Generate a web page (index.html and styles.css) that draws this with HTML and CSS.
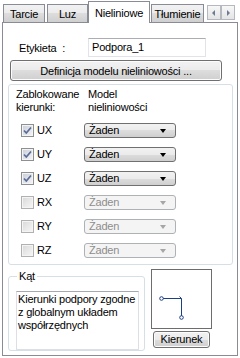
FILE: index.html
```html
<!DOCTYPE html>
<html lang="pl">
<head>
  <meta charset="UTF-8" />
  <title>Podpora - Nieliniowe</title>
  <link rel="stylesheet" href="styles.css">
</head>
<body>

  <div class="tabstrip">
    <div class="tab tab-tarcie">Tarcie</div>
    <div class="tab tab-luz">Luz</div>
    <div class="tab active">Nieliniowe</div>
    <div class="tab tab-tlum">Tłumienie</div>
    <div class="scroller">
      <span class="sbtn left"></span>
      <span class="sbtn right"></span>
    </div>
  </div>

  <div class="panel">
    <div class="label-row">
      <span class="label">Etykieta&nbsp; :</span>
      <div class="textbox">Podpora_1</div>
    </div>

    <button class="btn wide">Definicja modelu nieliniowości ...</button>

    <div class="group dofs">
      <div class="head">
        <div class="col1">Zablokowane<br>kierunki:</div>
        <div>Model<br>nieliniowości</div>
      </div>

      <div class="row">
        <span class="cb checked"><svg width="11" height="11" viewBox="0 0 11 11"><path d="M2 5.5 L4.3 8 L9 2.5" /></svg></span>
        <span class="dof">UX</span>
        <div class="combo">Żaden<i class="arrow"></i></div>
      </div>
      <div class="row">
        <span class="cb checked"><svg width="11" height="11" viewBox="0 0 11 11"><path d="M2 5.5 L4.3 8 L9 2.5" /></svg></span>
        <span class="dof">UY</span>
        <div class="combo">Żaden<i class="arrow"></i></div>
      </div>
      <div class="row">
        <span class="cb checked"><svg width="11" height="11" viewBox="0 0 11 11"><path d="M2 5.5 L4.3 8 L9 2.5" /></svg></span>
        <span class="dof">UZ</span>
        <div class="combo">Żaden<i class="arrow"></i></div>
      </div>
      <div class="row">
        <span class="cb"></span>
        <span class="dof">RX</span>
        <div class="combo disabled">Żaden<i class="arrow"></i></div>
      </div>
      <div class="row">
        <span class="cb"></span>
        <span class="dof">RY</span>
        <div class="combo disabled">Żaden<i class="arrow"></i></div>
      </div>
      <div class="row">
        <span class="cb"></span>
        <span class="dof">RZ</span>
        <div class="combo disabled">Żaden<i class="arrow"></i></div>
      </div>
    </div>

    <div class="bottom">
      <div class="group angle">
        <span class="legend">Kąt</span>
        <div class="memo">Kierunki podpory zgodne<br>z globalnym układem<br>współrzędnych</div>
      </div>

      <div class="dir">
        <div class="preview">
          <svg width="59" height="58" viewBox="0 0 59 58">
            <path class="axis" d="M11 28.5 H29.5 V46" />
            <path class="axis" d="M27.5 26.5 L29.5 28.5" />
            <circle class="node" cx="9.5" cy="28.5" r="1.8" />
            <circle class="node" cx="29.5" cy="47.5" r="1.8" />
          </svg>
        </div>
        <button class="btn small">Kierunek</button>
      </div>
    </div>
  </div>

</body>
</html>
```

FILE: styles.css
```css
body {
  margin: 0;
  width: 240px;
  height: 358px;
  background: #fff;
  font-family: "Liberation Sans", Arial, sans-serif;
  font-size: 11px;
  letter-spacing: -0.2px;
  color: #000;
  overflow: hidden;
}

/* tabs */
.tabstrip {
  display: flex;
  align-items: flex-end;
  height: 22px;
  padding-left: 3px;
}

.tab {
  box-sizing: border-box;
  display: flex;
  justify-content: center;
  height: 18px;
  padding-top: 2px;
  line-height: 15px;
  border: 1px solid #898c95;
  border-bottom: none;
  background: linear-gradient(#f2f2f2, #ebebeb 50%, #dddddd 50%, #cfcfcf);
  white-space: nowrap;
}

.tab-tarcie { width: 42px; }
.tab-luz { width: 41px; margin-left: 2px; }
.tab-tlum { width: 53px; margin-left: 1px; }

.tab.active {
  position: relative;
  z-index: 1;
  width: 62px;
  height: 22px;
  margin-bottom: -1px;
  padding-top: 4px;
  background: #fff;
}

.scroller {
  display: flex;
  align-self: flex-start;
  margin: 5px 0 0 3px;
}

.sbtn {
  position: relative;
  box-sizing: border-box;
  width: 14px;
  height: 15px;
  border: 1px solid #b5b8c0;
  background: linear-gradient(#f7f7f7, #e4e4e4);
}

.sbtn::after {
  content: "";
  position: absolute;
  top: 4px;
  width: 0;
  height: 0;
  border-top: 3px solid transparent;
  border-bottom: 3px solid transparent;
}

.sbtn.left::after { left: 4px; border-right: 3px solid #6d7a94; }
.sbtn.right::after { left: 5px; border-left: 3px solid #6d7a94; }

/* page */
.panel {
  box-sizing: border-box;
  width: 236px;
  height: 334px;
  margin-left: 2px;
  border: 1px solid #898c95;
  background: #fff;
}

.label-row {
  display: flex;
  align-items: center;
  margin-top: 15px;
  padding-left: 16px;
}

.label {
  width: 69px;
}

.textbox {
  box-sizing: border-box;
  width: 118px;
  height: 19px;
  padding-left: 3px;
  line-height: 16px;
  border: 1px solid #e2e3ea;
  border-top-color: #abadb3;
}

.btn {
  box-sizing: border-box;
  display: block;
  padding: 0;
  font-family: inherit;
  font-size: 11px;
  letter-spacing: inherit;
  color: #000;
  border: 1px solid #707070;
  border-radius: 3px;
  background: linear-gradient(#f2f2f2, #ebebeb 50%, #dddddd 50%, #cfcfcf);
  box-shadow: inset 0 0 0 1px #fcfcfc;
}

.btn.wide {
  width: 212px;
  height: 21px;
  margin: 3px 0 0 7px;
}

.group {
  box-sizing: border-box;
  border: 1px solid #d5dfe5;
  border-radius: 3px;
}

.dofs {
  width: 225px;
  height: 181px;
  margin: 3px 0 0 5px;
  padding: 3px 7px 2px;
}

.head {
  display: flex;
  line-height: 13px;
  margin-bottom: 4px;
}

.col1 {
  width: 72px;
}

.row {
  display: flex;
  align-items: center;
  height: 24px;
}

.cb {
  box-sizing: border-box;
  display: flex;
  align-items: center;
  justify-content: center;
  width: 13px;
  height: 13px;
  margin-left: 5px;
  border: 1px solid #b1b1b1;
  background: linear-gradient(135deg, #d8d8d8, #f7f7f7);
  box-shadow: inset 0 0 0 1px #f4f4f4;
}

.cb.checked {
  border-color: #8e8f8f;
  background: linear-gradient(135deg, #c9cdd6, #f4f5f8);
}

.cb svg path {
  fill: none;
  stroke: #5a6c98;
  stroke-width: 1.7;
}

.dof {
  width: 47px;
  margin-left: 3px;
}

.combo {
  box-sizing: border-box;
  position: relative;
  width: 92px;
  height: 15px;
  padding-left: 4px;
  line-height: 13px;
  border: 1px solid #707070;
  border-radius: 3px;
  background: linear-gradient(#f2f2f2, #ebebeb 50%, #dddddd 50%, #cfcfcf);
}

.arrow {
  position: absolute;
  right: 9px;
  top: 5px;
  width: 0;
  height: 0;
  border-left: 3.5px solid transparent;
  border-right: 3.5px solid transparent;
  border-top: 4px solid #000;
}

.combo.disabled {
  color: #8d8d8d;
  border-color: #adb2b5;
  background: #f4f4f4;
}

.combo.disabled .arrow {
  border-top-color: #a6a6a6;
}

/* bottom part */
.bottom {
  display: flex;
  align-items: flex-start;
  margin-top: 4px;
}

.angle {
  width: 137px;
  height: 75px;
  margin: 7px 0 0 5px;
}

.legend {
  display: inline-block;
  margin: -7px 0 0 8px;
  padding: 0 2px;
  line-height: 13px;
  background: #fff;
  vertical-align: top;
}

.memo {
  box-sizing: border-box;
  width: 123px;
  height: 59px;
  margin: 2px 0 0 7px;
  padding: 1px 0 0 1px;
  line-height: 13px;
  white-space: nowrap;
  overflow: hidden;
  border: 1px solid #dcdfe6;
  border-top-color: #a5a9b0;
}

.dir {
  margin-left: 6px;
}

.preview {
  box-sizing: border-box;
  width: 61px;
  height: 60px;
  border: 1px solid #6d6d6d;
}

.preview svg {
  display: block;
}

.axis {
  fill: none;
  stroke: #1d3f86;
  stroke-width: 1;
}

.node {
  fill: #fff;
  stroke: #1d3f86;
  stroke-width: 1;
}

.btn.small {
  width: 57px;
  height: 17px;
  margin: 2px 0 0 2px;
  line-height: 13px;
}
```
